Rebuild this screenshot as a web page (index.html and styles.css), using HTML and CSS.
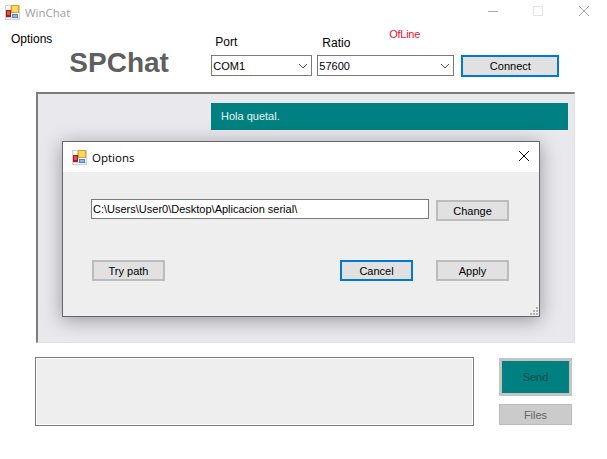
FILE: index.html
```html
<!DOCTYPE html>
<html>
<head>
  <title>WinChat</title>
  <link rel="stylesheet" href="styles.css">
</head>
<body>
  <div id="window">
    <div class="titlebar">
      <svg class="app-icon" width="15" height="15" viewBox="0 0 15 15">
        <rect x="0.500" y="0.500" width="14" height="14" fill="#fff" stroke="#cfcfcf"/>
        <path d="M0 5.500H6M5.500 0V15M0 12.500H15M12.500 12V15" stroke="#d4d4d4" fill="none"/>
        <rect x="1" y="5" width="5" height="7" fill="#a81818"/>
        <rect x="2" y="6" width="3" height="4" fill="#e05050"/>
        <rect x="6" y="0" width="8" height="8" fill="#e0a010"/>
        <rect x="7" y="1" width="6" height="6" fill="#fbd860"/>
        <rect x="7" y="9" width="6" height="4" fill="#4a80d8"/>
        <rect x="8" y="10" width="4" height="2" fill="#90b8f0"/>
      </svg>
      <span class="app-name">WinChat</span>
      <div class="win-buttons">
        <svg width="120" height="24" viewBox="0 0 120 24">
          <path d="M0 11.500H10" stroke="#a8a8a8" fill="none"/>
          <rect x="45.500" y="6.500" width="9" height="9" stroke="#e4e4e4" fill="none"/>
          <path d="M91 6L101 16M101 6L91 16" stroke="#a8a8a8" fill="none"/>
        </svg>
      </div>
    </div>

    <div class="toolbar">
      <div class="menu-item">Options</div>
      <div class="logo">SPChat</div>
      <div class="field field-port">
        <label>Port</label>
        <div class="combo combo-port">COM1
          <svg class="chevron" width="10" height="6" viewBox="0 0 10 6"><path d="M1 1L5 5L9 1" stroke="#555" fill="none"/></svg>
        </div>
      </div>
      <div class="field field-ratio">
        <label>Ratio</label>
        <div class="combo combo-ratio">57600
          <svg class="chevron" width="10" height="6" viewBox="0 0 10 6"><path d="M1 1L5 5L9 1" stroke="#555" fill="none"/></svg>
        </div>
        <span class="status">OfLine</span>
      </div>
      <button class="btn btn-focus btn-connect">Connect</button>
    </div>

    <div id="chat-history">
      <div class="bubble">Hola quetal.</div>
    </div>

    <div class="bottom">
      <div id="message-box"></div>
      <div class="side">
        <button class="btn-send">Send</button>
        <button class="btn-files">Files</button>
      </div>
    </div>

    <div id="options-dialog">
      <div class="dialog-title">
        <svg class="app-icon" width="15" height="15" viewBox="0 0 15 15">
          <rect x="0.500" y="0.500" width="14" height="14" fill="#fff" stroke="#cfcfcf"/>
          <path d="M0 5.500H6M5.500 0V15M0 12.500H15M12.500 12V15" stroke="#d4d4d4" fill="none"/>
          <rect x="1" y="5" width="5" height="7" fill="#a81818"/>
          <rect x="2" y="6" width="3" height="4" fill="#e05050"/>
          <rect x="6" y="0" width="8" height="8" fill="#e0a010"/>
          <rect x="7" y="1" width="6" height="6" fill="#fbd860"/>
          <rect x="7" y="9" width="6" height="4" fill="#4a80d8"/>
          <rect x="8" y="10" width="4" height="2" fill="#90b8f0"/>
        </svg>
        <span>Options</span>
        <svg class="dialog-close" width="12" height="12" viewBox="0 0 12 12"><path d="M1 1L11 11M11 1L1 11" stroke="#111" fill="none"/></svg>
      </div>
      <div class="dialog-body">
        <div class="path-row">
          <div class="path-input">C:\Users\User0\Desktop\Aplicacion serial\</div>
          <button class="btn btn-change">Change</button>
        </div>
        <div class="action-row">
          <button class="btn">Try path</button>
          <button class="btn btn-focus btn-cancel">Cancel</button>
          <button class="btn">Apply</button>
        </div>
      </div>
      <svg class="grip" width="10" height="10" viewBox="0 0 10 10" fill="#b4b4b4">
        <rect x="7" y="1" width="2" height="2"/>
        <rect x="4" y="4" width="2" height="2"/>
        <rect x="7" y="4" width="2" height="2"/>
        <rect x="1" y="7" width="2" height="2"/>
        <rect x="4" y="7" width="2" height="2"/>
        <rect x="7" y="7" width="2" height="2"/>
      </svg>
    </div>
  </div>
</body>
</html>
```

FILE: styles.css
```css
html, body {
  margin: 0;
  background-color: #fff;
}

#window {
  position: relative;
  width: 607px;
  height: 459px;
  overflow: hidden;
  font-family: "Liberation Sans", Arial, sans-serif;
  font-size: 11px;
  color: #000;
}

.titlebar {
  display: flex;
  align-items: center;
  height: 24px;
  padding-left: 5px;
}

.app-name {
  margin-left: 5px;
  font-family: "Open Sans", sans-serif;
  font-size: 11.500px;
  color: #a0a0a0;
}

.win-buttons {
  margin-left: auto;
  height: 24px;
  width: 119px;
}

.toolbar {
  display: flex;
  height: 68px;
}

.menu-item {
  margin: 8px 0 0 11px;
  height: 14px;
  font-size: 12px;
  line-height: 14px;
}

.logo {
  margin: 23px 0 0 17px;
  width: 142px;
  font-size: 28px;
  font-weight: bold;
  line-height: 32px;
  color: #5f5f5f;
}

.field {
  position: relative;
  display: flex;
  flex-direction: column;
  margin-top: 12px;
}

.field label {
  height: 19px;
  font-size: 12px;
  line-height: 14px;
  padding-left: 4px;
}

.field-port label {
  line-height: 12px;
}

.field-ratio {
  margin-left: 5px;
}

.field-ratio label {
  padding-left: 5px;
}

.combo {
  display: flex;
  align-items: center;
  justify-content: space-between;
  box-sizing: border-box;
  height: 21px;
  padding: 0 3px 0 1px;
  border: 1px solid #7a7a7a;
  background-color: #fff;
}

.combo-port {
  width: 101px;
}

.combo-ratio {
  width: 137px;
}

.status {
  position: absolute;
  top: -9px;
  left: 72px;
  font-size: 11px;
  line-height: 14px;
  color: #f01030;
  letter-spacing: -0.3px;
}

.btn {
  box-sizing: border-box;
  width: 73px;
  height: 21px;
  padding: 0;
  border: 2px solid #bcbcbc;
  background-color: #e1e1e1;
  font-family: inherit;
  font-size: 11px;
  color: #000;
}

.btn-focus {
  border-color: #0078d7;
}

.btn-connect {
  width: 98px;
  height: 22px;
  margin: 31px 0 0 7px;
}

#chat-history {
  box-sizing: border-box;
  width: 539px;
  height: 251px;
  margin-left: 36px;
  padding: 9px 6px 0 173px;
  border-top: 2px solid #7d7d7d;
  border-left: 2px solid #7d7d7d;
  border-right: 1px solid #e0e0e0;
  border-bottom: 1px solid #e0e0e0;
  background-color: #e8e8ed;
}

.bubble {
  box-sizing: border-box;
  height: 27px;
  padding-left: 10px;
  line-height: 27px;
  background-color: #008080;
  color: #e8f4f4;
}

.bottom {
  display: flex;
  margin: 14px 0 0 35px;
}

#message-box {
  box-sizing: border-box;
  width: 439px;
  height: 69px;
  border: 1px solid #7a7a7a;
  outline: 1px solid #fff;
  outline-offset: -2px;
  background-color: #eeeeee;
}

.side {
  display: flex;
  flex-direction: column;
  gap: 8px;
  margin: 1px 0 0 25px;
}

.btn-send {
  box-sizing: border-box;
  width: 73px;
  height: 38px;
  padding: 0;
  border: 3px solid #c4c4c4;
  background-color: #008080;
  font-family: inherit;
  font-size: 11px;
  color: #0a4a4a;
}

.btn-files {
  box-sizing: border-box;
  width: 73px;
  height: 21px;
  padding: 0;
  border: 1px solid #bcbcbc;
  background-color: #cbcbcb;
  font-family: inherit;
  font-size: 11px;
  color: #666;
}

/* dialog sits over the main window */
#options-dialog {
  position: absolute;
  left: 62px;
  top: 141px;
  box-sizing: border-box;
  width: 478px;
  height: 176px;
  border: 1px solid #666;
  background-color: #eeeeee;
  box-shadow: 0 3px 18px rgba(0, 0, 0, 0.35);
}

.dialog-title {
  display: flex;
  align-items: center;
  height: 30px;
  padding: 0 11px 0 9px;
  background-color: #fff;
  font-family: "Open Sans", sans-serif;
  font-size: 11.500px;
}

.dialog-title span {
  margin-left: 5px;
}

.dialog-close {
  margin: 0 -2px 2px auto;
}

.dialog-body {
  padding: 27px 30px 0 28px;
}

.path-row {
  display: flex;
}

.path-input {
  box-sizing: border-box;
  width: 338px;
  height: 20px;
  padding-left: 1px;
  border: 1px solid #7a7a7a;
  background-color: #fff;
  line-height: 18px;
}

.btn-change {
  margin: 1px 0 0 7px;
}

.action-row {
  display: flex;
  gap: 23px;
  margin: 39px 0 0 1px;
}

.btn-cancel {
  margin-left: 152px;
}

.grip {
  position: absolute;
  right: 0;
  bottom: 0;
}
```
